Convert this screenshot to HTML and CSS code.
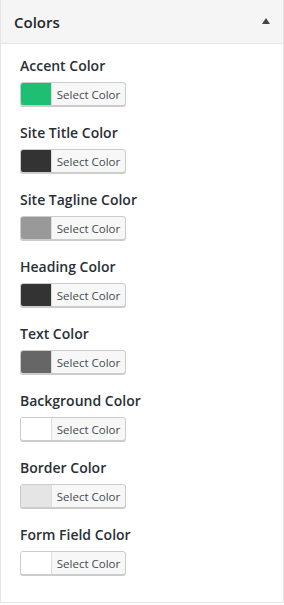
FILE: index.html
```html
<!DOCTYPE html>
<html lang="en">
<head>
    <meta charset="UTF-8">
    <meta name="viewport" content="width=device-width, initial-scale=1.0">
    <title>Colors</title>
    <link rel="stylesheet" href="styles.css">
</head>
<body>
    <div class="panel">
        <div class="panel-header">
            <h3>Colors</h3>
            <span class="toggle"></span>
        </div>

        <div class="panel-body">
            <div class="control">
                <label>Accent Color</label>
                <button class="color-btn"><span class="swatch" style="background:#1ebf72"></span><span class="btn-text">Select Color</span></button>
            </div>
            <div class="control">
                <label>Site Title Color</label>
                <button class="color-btn"><span class="swatch" style="background:#333333"></span><span class="btn-text">Select Color</span></button>
            </div>
            <div class="control">
                <label>Site Tagline Color</label>
                <button class="color-btn"><span class="swatch" style="background:#999999"></span><span class="btn-text">Select Color</span></button>
            </div>
            <div class="control">
                <label>Heading Color</label>
                <button class="color-btn"><span class="swatch" style="background:#333333"></span><span class="btn-text">Select Color</span></button>
            </div>
            <div class="control">
                <label>Text Color</label>
                <button class="color-btn"><span class="swatch" style="background:#666666"></span><span class="btn-text">Select Color</span></button>
            </div>
            <div class="control">
                <label>Background Color</label>
                <button class="color-btn"><span class="swatch" style="background:#ffffff"></span><span class="btn-text">Select Color</span></button>
            </div>
            <div class="control">
                <label>Border Color</label>
                <button class="color-btn"><span class="swatch" style="background:#e5e5e5"></span><span class="btn-text">Select Color</span></button>
            </div>
            <div class="control">
                <label>Form Field Color</label>
                <button class="color-btn"><span class="swatch" style="background:#ffffff"></span><span class="btn-text">Select Color</span></button>
            </div>
        </div>
    </div>
</body>
</html>
```

FILE: styles.css
```css
body {
    font-family: "Open Sans", Arial, sans-serif;
    background-color: #ffffff;
    color: #23282d;
    margin: 0;
}
.panel {
    width: 284px;
    height: 603px;
    box-sizing: border-box;
    border: 1px solid #e5e5e5;
    border-top: none;
    background: #ffffff;
}
.panel-header {
    height: 43px;
    background: #f5f5f5;
    border-bottom: 1px solid #e5e5e5;
    display: flex;
    align-items: center;
    justify-content: space-between;
    padding: 0 13px 0 13px;
}
.panel-header h3 {
    margin: 0;
    font-size: 15px;
    font-weight: 600;
    color: #23282d;
}
/* Collapse arrow */
.toggle {
    width: 0;
    height: 0;
    border-left: 4px solid transparent;
    border-right: 4px solid transparent;
    border-bottom: 6px solid #444;
    margin-top: -1px;
}
.panel-body {
    padding: 12px 19px 0 19px;
}
.control {
    margin-bottom: 17px;
}
.control label {
    display: block;
    font-size: 14px;
    font-weight: 600;
    line-height: 20px;
    margin-bottom: 6px;
    color: #2a2f34;
}
.color-btn {
    display: flex;
    align-items: stretch;
    height: 24px;
    width: 106px;
    padding: 0;
    border: 1px solid #cccccc;
    border-radius: 3px;
    background: #f7f7f7;
    box-shadow: 0 1px 0 #cccccc;
    overflow: hidden;
    cursor: pointer;
    font-family: inherit;
}
.swatch {
    width: 30px;
    border-right: 1px solid #dddddd;
}
.btn-text {
    flex: 1;
    display: flex;
    align-items: center;
    justify-content: center;
    font-size: 11.5px;
    color: #444b52;
}
```
